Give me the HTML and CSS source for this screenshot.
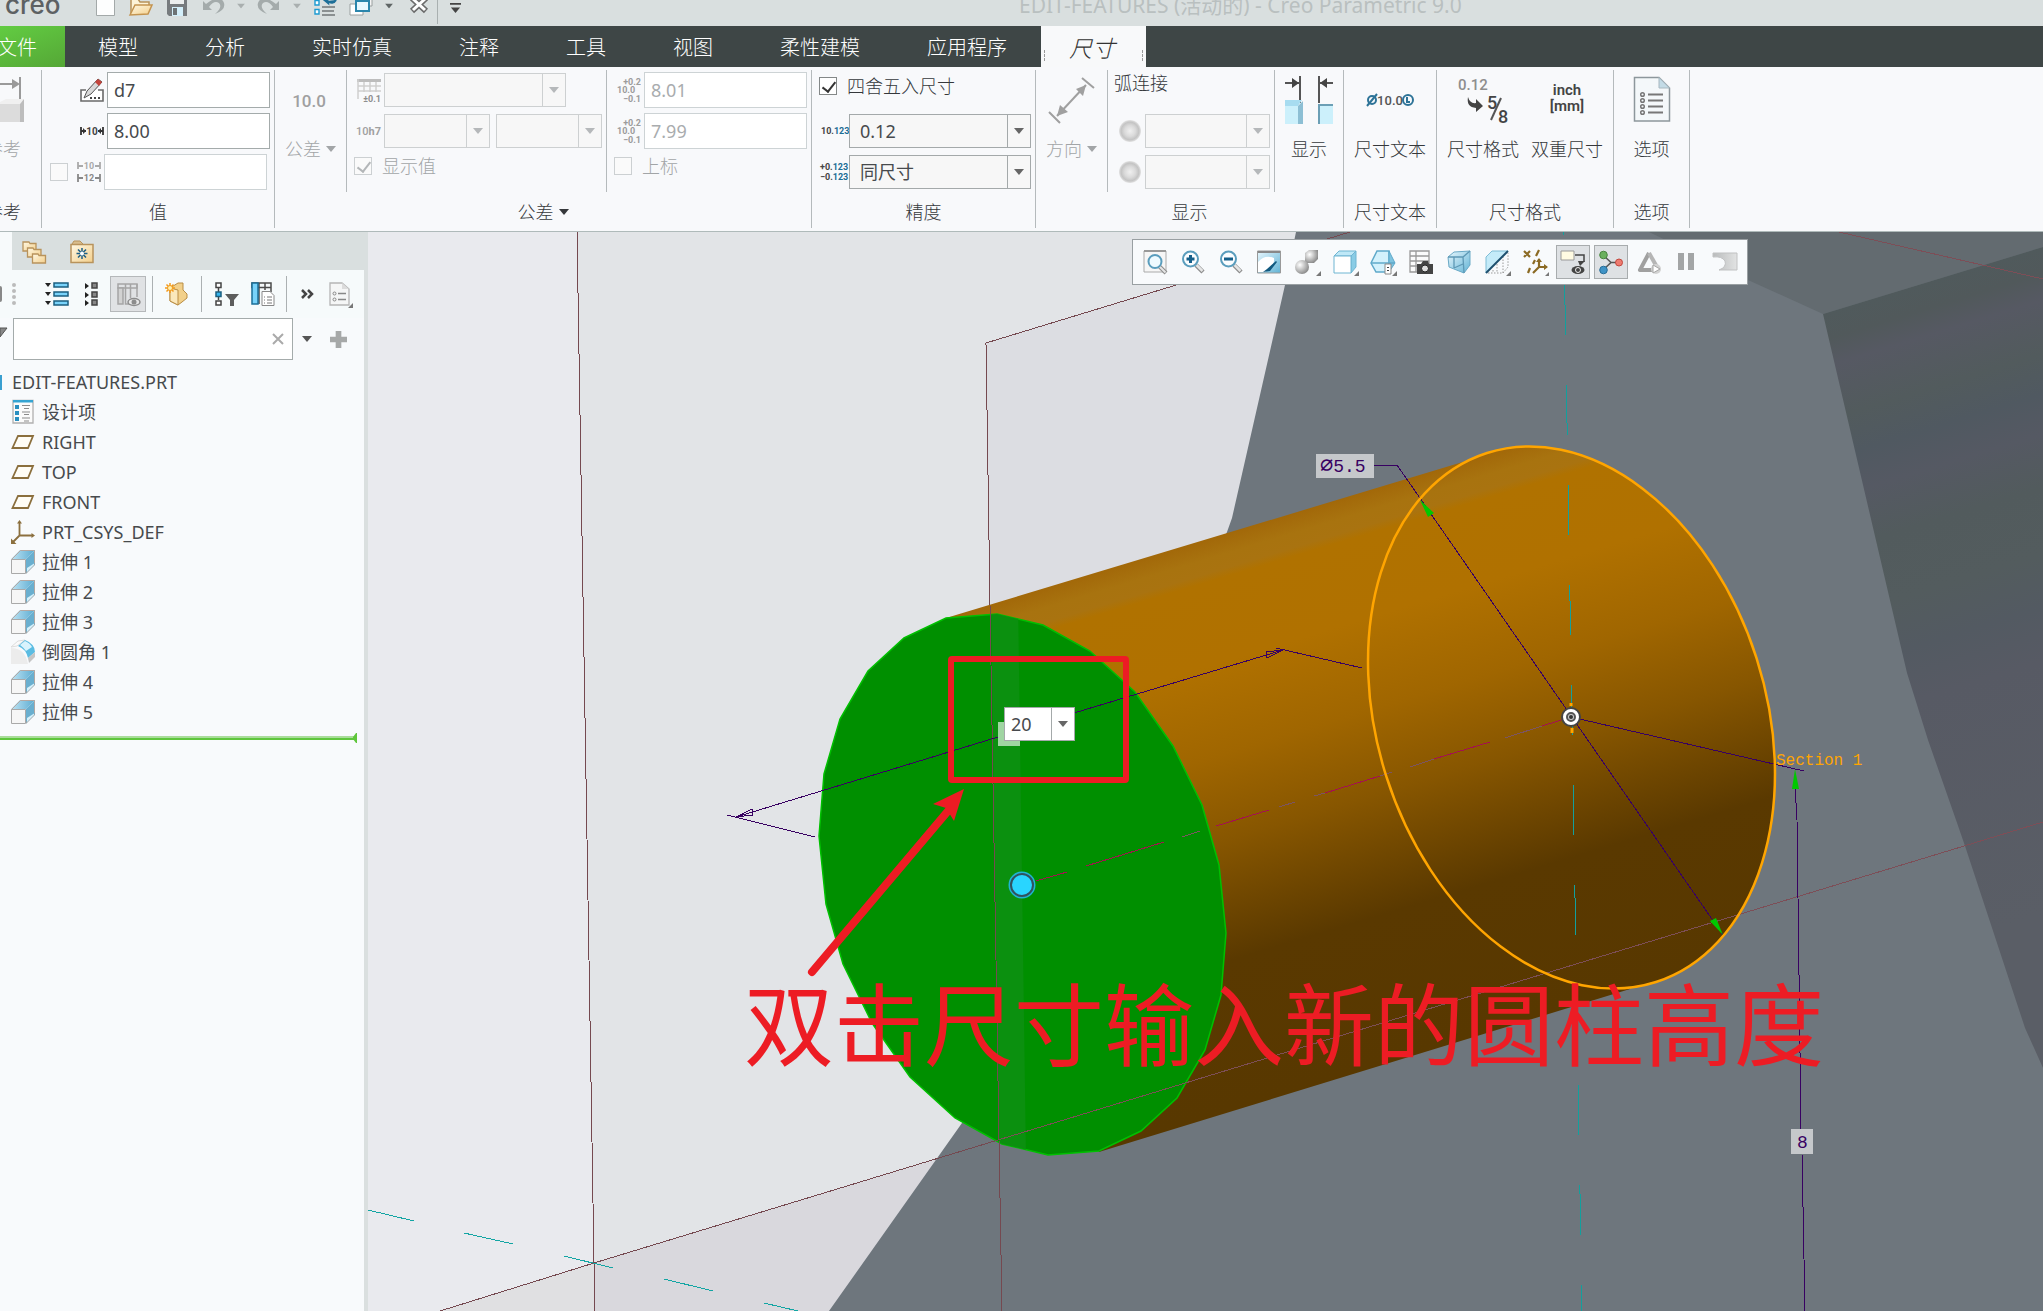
FILE: index.html
```html
<!DOCTYPE html>
<html lang="zh-CN">
<head>
<meta charset="utf-8">
<title>EDIT-FEATURES (活动的) - Creo Parametric 9.0</title>
<link rel="stylesheet" href="styles.css">
</head>
<body>
<svg class="defs" width="0" height="0" aria-hidden="true">
  <defs>
    <linearGradient id="gFolder" x1="0" y1="0" x2="1" y2="1"><stop offset="0" stop-color="#fff8e4"/><stop offset="1" stop-color="#f3cf8b"/></linearGradient>
    <linearGradient id="gBlue" x1="0" y1="0" x2="1" y2="1"><stop offset="0" stop-color="#e8f7fd"/><stop offset="1" stop-color="#62b4d6"/></linearGradient>
    <linearGradient id="gTop" x1="0" y1="0" x2="1" y2="0"><stop offset="0" stop-color="#bfe4f4"/><stop offset="1" stop-color="#5aabd0"/></linearGradient>
    <linearGradient id="gStop" x1="0" y1="0" x2="1" y2="0"><stop offset="0" stop-color="#b9bbbc"/><stop offset="1" stop-color="#e2e3e3"/></linearGradient>
    <radialGradient id="gBall" cx=".35" cy=".35" r=".7"><stop offset="0" stop-color="#fff"/><stop offset="1" stop-color="#888"/></radialGradient>
    <radialGradient id="gDot"><stop offset="0" stop-color="#f0f0f0"/><stop offset=".5" stop-color="#dadada"/><stop offset=".8" stop-color="#c4c4c4"/><stop offset=".9" stop-color="#d2d2d2"/><stop offset="1" stop-color="#e4e4e4"/></radialGradient>
    <symbol id="plane" viewBox="0 0 24 24"><path d="M7 6H22L17 18H1.500Z" fill="#fffdf6" stroke="#8b6f3e" stroke-width="1.800"/></symbol>
    <symbol id="extrude" viewBox="0 0 24 24"><path d="M0 9L9 0H24L15 9Z" fill="url(#gTop)"/><path d="M15 9L24 0V14L15 23Z" fill="#6aafcf"/><path d="M15 22L24 13V15L15 24Z" fill="#9ca7ad"/><path d="M16 18L23 13.500V15L16 22Z" fill="#d6f0fa"/><path d="M.500 9.500L9.500 .500H23.500V13" fill="none" stroke="#b3a8a3"/><path d="M.500 9.500H14.500V23.500H.500Z" fill="#f6f6f6" stroke="#a9a9a9"/></symbol>
    <symbol id="tri" viewBox="0 0 10 6"><path d="M0 0H10L5 6Z" fill="currentColor"/></symbol>
    <symbol id="tol" viewBox="0 0 24 24"><g font-family="Roboto" font-weight="700" font-size="9" fill="#9c9c9c"><text x="24" y="7" text-anchor="end">+0.2</text><text x="0" y="15" font-size="9">10.0</text><text x="24" y="24" text-anchor="end">−0.1</text></g></symbol>
    <symbol id="lens" viewBox="0 0 24 24"><path d="M15 15L22 22" stroke="#8d8d8d" stroke-width="4.500"/><path d="M15.500 15L21.500 21" stroke="#e6e6e6" stroke-width="2.500"/><circle cx="9.500" cy="9" r="7.500" fill="#fbfdff" stroke="#5a9dbd" stroke-width="2"/></symbol>
  </defs>
</svg>

<header class="titlebar">
  <div class="titlebar-in">
    <span class="logo">creo<sup>•</sup></span>
    <div class="quick">
      <button class="q" aria-label="新建"><svg viewBox="0 0 24 24"><path d="M3.500 0H16L21.500 5V23.500H3.500Z" fill="#fdfefe" stroke="#a3a9a9"/></svg></button>
      <button class="q" aria-label="打开"><svg viewBox="0 0 24 24"><path d="M2 22V7H9L11 10H20V14" fill="#fdf3d8" stroke="#b8925a" stroke-width="1.500"/><path d="M1 23L6 13H23L19 22Z" fill="url(#gFolder)" stroke="#c49450" stroke-width="1.500"/></svg></button>
      <button class="q" aria-label="保存"><svg viewBox="0 0 24 24"><path d="M2 0H22V24H4L2 22Z" fill="#777b7e"/><path d="M5 0H19V12H5Z" fill="#eceeee"/><path d="M7 15H18V24H7Z" fill="#d4effa"/><path d="M8 16H12V23H8Z" fill="#6d7375"/></svg></button>
      <button class="q" aria-label="撤消"><svg viewBox="0 0 24 24"><path d="M2 9V18H11L8 15Q13 8 18 11Q22 15 14 22Q25 18 23 11Q19 1 5 12Z" fill="#a4abab"/></svg></button>
      <button class="dd" aria-label="撤消列表"><svg viewBox="0 0 10 6"><use href="#tri" color="#a9afaf"/></svg></button>
      <button class="q" aria-label="重做"><svg viewBox="0 0 24 24"><path d="M22 9V18H13L16 15Q11 8 6 11Q2 15 10 22Q-1 18 1 11Q5 1 19 12Z" fill="#a4abab"/></svg></button>
      <button class="dd" aria-label="重做列表"><svg viewBox="0 0 10 6"><use href="#tri" color="#a9afaf"/></svg></button>
      <button class="q" aria-label="重新生成"><svg viewBox="0 0 24 24"><path d="M2 8.500H6V13H2ZM2 17.500H6V22H2Z" fill="#fff" stroke="#1c9ad1" stroke-width="1.400"/><path d="M9 15H22M9 19H21M9 23H22" stroke="#8b9091" stroke-width="2"/><path d="M9 6L15 11L14 6ZM14 9Q20 13 23 8" fill="#1d6f98" stroke="#1d6f98" stroke-width="2"/></svg></button>
      <button class="q" aria-label="窗口"><svg viewBox="0 0 24 24"><path d="M1 12H14V23H1Z" fill="#fff" stroke="#9aa0a0"/><path d="M10 4H23V14H10Z" fill="#f4f4f4" stroke="#9aa0a0"/><path d="M7 9H20V19H7Z" fill="#e8f8ff" stroke="#2b86ac" stroke-width="2"/></svg></button>
      <button class="dd" aria-label="窗口列表"><svg viewBox="0 0 10 6"><use href="#tri" color="#5f6565"/></svg></button>
      <button class="q" aria-label="关闭"><svg viewBox="0 0 24 24"><path d="M7 6L21 19M21 6L7 19" stroke="#6b6b6b" stroke-width="6"/><path d="M8 7L20 18M20 7L8 18" stroke="#fff" stroke-width="3"/></svg></button>
      <i class="q-sep"></i>
      <button class="more" aria-label="自定义"><svg viewBox="0 0 12 12"><path d="M0 0H12V2H0ZM1 5H11L6 11Z" fill="#444"/></svg></button>
    </div>
    <h1 class="doc-title">EDIT-FEATURES (活动的) - Creo Parametric 9.0</h1>
  </div>
</header>

<nav class="tabs">
  <button class="tab file">文件</button>
  <button class="tab">模型</button>
  <button class="tab">分析</button>
  <button class="tab">实时仿真</button>
  <button class="tab">注释</button>
  <button class="tab">工具</button>
  <button class="tab">视图</button>
  <button class="tab">柔性建模</button>
  <button class="tab">应用程序</button>
  <button class="tab active">尺寸</button>
</nav>

<section class="ribbon">
  <div class="group g-ref">
    <div class="cols"><div class="big off">
      <svg viewBox="0 0 24 48"><path d="M0 8H17M20 1V24" stroke="#9a9a9a" stroke-width="2" fill="none"/><path d="M12 3L20 8L12 13Z" fill="#9a9a9a"/><path d="M0 26L6 23H24L20 28H0Z" fill="#f0f0f0"/><path d="M0 28H20V46H0Z" fill="#dcdcdc"/><path d="M20 28L24 23V46H20Z" fill="#bdbdbd"/></svg>
      <span>参考</span></div></div>
    <div class="g-label">参考</div>
  </div>

  <div class="group g-value">
    <div class="cols"><div class="rows end">
      <label class="row"><svg class="ic" viewBox="0 0 24 24"><path d="M6 12H1V23H23V12H18" fill="#fff" stroke="#6a6a6a" stroke-width="1.600"/><path d="M4 20L7 13L18 1L22 4L11 16Z" fill="#d9d9d9" stroke="#555"/><path d="M18 1L22 4L19 8L15 4Z" fill="#c4443c"/><path d="M10 20H12M14 20H16M18 20H20" stroke="#444" stroke-width="2"/></svg><input type="text" class="w163" value="d7" aria-label="名称"></label>
      <label class="row"><svg class="ic" viewBox="0 0 24 24"><path d="M1 8V16M23 8V16M1 12H6M18 12H23" stroke="#333" stroke-width="1.800"/><path d="M3 9L6 12L3 15ZM21 9L18 12L21 15Z" fill="#333"/><text x="12" y="16" text-anchor="middle" font-family="Roboto" font-weight="700" font-size="10" fill="#444">10</text></svg><input type="text" class="w163" value="8.00" aria-label="值"></label>
      <div class="row shift"><input type="checkbox" disabled aria-label="覆盖值" class="pre"><svg class="ic" viewBox="0 0 24 24"><path d="M1 2V9M23 2V9M1 6H6M18 6H23" stroke="#aaa" stroke-width="1.800"/><path d="M1 14V22M23 14V22M1 18H6M18 18H23" stroke="#888" stroke-width="1.800"/><g font-family="Roboto" font-weight="700" font-size="9" fill="#aaa" text-anchor="middle"><text x="12" y="9">10</text><text x="12" y="21" fill="#888">12</text></g></svg><input type="text" class="w163" disabled aria-label="覆盖"></div>
    </div></div>
    <div class="g-label">值</div>
  </div>

  <div class="group g-tol">
    <div class="cols">
      <button class="big off w71" disabled><svg viewBox="0 0 48 48"><text x="22" y="31" text-anchor="middle" class="dimt" font-weight="500" font-size="17" fill="#a0a0a0">10.0</text></svg><span>公差<svg class="t" viewBox="0 0 10 6"><use href="#tri"/></svg></span></button>
      <div class="rows div pad-a">
        <div class="row"><svg class="ic" viewBox="0 0 24 24"><path d="M0 1H24V4H0Z" fill="#bdbdbd"/><path d="M1 1V21M7 4V14M13 4V14M19 4V14M1 8H24M1 13H24" stroke="#cfcfcf" stroke-width="1.500"/><text x="24" y="24" text-anchor="end" font-family="Roboto" font-weight="700" font-size="9" fill="#8e8e8e">±0.1</text></svg><span class="combo w182"><select disabled aria-label="公差表"><option></option></select></span></div>
        <div class="row"><svg class="ic" viewBox="0 0 24 24"><text x="-1" y="16" class="dimt" font-weight="500" font-size="11" fill="#a0a0a0">10<tspan font-weight="700">h7</tspan></text></svg><span class="combo w106"><select disabled aria-label="公差代号"><option></option></select></span><span class="combo w106 gap6"><select disabled aria-label="公差等级"><option></option></select></span></div>
        <label class="row chk off low"><input type="checkbox" checked disabled>显示值</label>
      </div>
      <div class="rows div pad-a">
        <div class="row"><svg class="ic" viewBox="0 0 24 24"><use href="#tol"/></svg><input type="text" class="w163" value="8.01" disabled aria-label="上公差"></div>
        <div class="row"><svg class="ic" viewBox="0 0 24 24"><use href="#tol"/></svg><input type="text" class="w163" value="7.99" disabled aria-label="下公差"></div>
        <label class="row chk off low"><input type="checkbox" disabled>上标</label>
      </div>
    </div>
    <div class="g-label">公差<svg class="t" viewBox="0 0 10 6"><use href="#tri"/></svg></div>
  </div>

  <div class="group g-prec">
    <div class="cols"><div class="rows pad-a">
      <label class="row chk high"><input type="checkbox" checked>四舍五入尺寸</label>
      <div class="row"><svg class="ic" viewBox="0 0 24 24"><text x="-1" y="15" class="dimt" font-weight="700" font-size="9" fill="#444">10.<tspan fill="#1b6d95">123</tspan></text></svg><span class="combo w182"><select aria-label="小数位数"><option>0.12</option></select></span></div>
      <div class="row"><svg class="ic" viewBox="0 0 24 24"><g class="dimt" font-weight="700" font-size="9" fill="#444"><text x="-2" y="10">+0.<tspan fill="#1b6d95">123</tspan></text><text x="-2" y="20">−0.<tspan fill="#1b6d95">123</tspan></text></g></svg><span class="combo w182"><select aria-label="公差小数位数"><option>同尺寸</option></select></span></div>
    </div></div>
    <div class="g-label">精度</div>
  </div>

  <div class="group g-disp">
    <div class="cols">
      <button class="big off w71" disabled><svg viewBox="0 0 48 48"><path d="M9 40L38 9" stroke="#a0a0a0" stroke-width="2"/><path d="M38 9L28 13L35 20ZM9 40L12 29L20 36Z" fill="#a0a0a0"/><path d="M34 2L46 12M1 36L12 47" stroke="#a0a0a0" stroke-width="2"/></svg><span>方向<svg class="t" viewBox="0 0 10 6"><use href="#tri"/></svg></span></button>
      <div class="rows div pad-b">
        <div class="row high2">弧连接</div>
        <label class="row dotrow"><svg class="ball" viewBox="0 0 22 22"><circle cx="11" cy="11" r="11" fill="url(#gDot)"/></svg><span class="combo w125"><select disabled aria-label="弧连接一"><option></option></select></span></label>
        <label class="row dotrow"><svg class="ball" viewBox="0 0 22 22"><circle cx="11" cy="11" r="11" fill="url(#gDot)"/></svg><span class="combo w125"><select disabled aria-label="弧连接二"><option></option></select></span></label>
      </div>
      <button class="big div w69"><svg viewBox="0 0 48 48"><path d="M15 0V27M34 0V27M0 7H14M34 7H48" stroke="#555" stroke-width="2"/><path d="M7 2L14 7L7 12ZM42 2L35 7L42 12Z" fill="#444"/><path d="M0 24H17L13 30H0Z" fill="#a7dcf0"/><path d="M0 30H13V48H0Z" fill="#ccf0fb"/><path d="M13 30L18 25V48H13Z" fill="#8dbfd4"/><path d="M34 29H48V48H34Z" fill="#ccf0fb"/><path d="M34 48V29H48" fill="none" stroke="#6b9fb5" stroke-width="2"/></svg><span>显示</span></button>
    </div>
    <div class="g-label">显示</div>
  </div>

  <div class="group g-text">
    <div class="cols"><button class="big w92"><svg viewBox="0 0 48 48"><circle cx="6" cy="24" r="4" fill="none" stroke="#2d7397" stroke-width="2"/><path d="M1 30L11 18" stroke="#2d7397" stroke-width="2"/><text x="24" y="29" text-anchor="middle" class="dimt" font-weight="500" font-size="13" fill="#555">10.0</text><circle cx="42" cy="24" r="5" fill="none" stroke="#2d7397" stroke-width="2"/><path d="M41 21V26H44" fill="none" stroke="#2d7397" stroke-width="2"/></svg><span>尺寸文本</span></button></div>
    <div class="g-label">尺寸文本</div>
  </div>

  <div class="group g-fmt">
    <div class="cols">
      <button class="big w84"><svg viewBox="0 0 48 48"><text x="-1" y="14" class="dimt" font-weight="500" font-size="15" fill="#8e8e8e">0.12</text><path d="M9 21Q11 28 17 27V23L24 30L17 36V32Q7 31 9 21Z" fill="#444"/><text x="28" y="33" class="dimt" font-weight="500" font-size="18" fill="#444">5</text><path d="M32 44L42 22" stroke="#555" stroke-width="2"/><text x="39" y="47" class="dimt" font-weight="500" font-size="18" fill="#444">8</text></svg><span>尺寸格式</span></button>
      <button class="big w84"><svg viewBox="0 0 48 48"><g class="dimt" font-weight="600" font-size="15" fill="#444" text-anchor="middle"><text x="24" y="19">inch</text><text x="24" y="35">[mm]</text></g></svg><span>双重尺寸</span></button>
    </div>
    <div class="g-label">尺寸格式</div>
  </div>

  <div class="group g-opt">
    <div class="cols"><button class="big w75"><svg viewBox="0 0 48 48"><path d="M6.500 1.500H31L41.500 12V45H6.500Z" fill="#f4f8fa" stroke="#8d979c" stroke-width="1.500"/><path d="M31 1.500V12H41.500Z" fill="#c3dbe6" stroke="#a8b8c0"/><g fill="none" stroke="#777" stroke-width="1.500"><circle cx="14.500" cy="18.500" r="1.800"/><circle cx="14.500" cy="24.500" r="1.800"/><circle cx="14.500" cy="30.500" r="1.800"/><circle cx="14.500" cy="36.500" r="1.800"/><path d="M20 18.500H35M20 24.500H35M20 30.500H35M20 36.500H35" stroke-width="2"/></g></svg><span>选项</span></button></div>
    <div class="g-label">选项</div>
  </div>
</section>

<main class="work">
  <aside class="side">
    <div class="side-tabs">
      <button aria-label="文件夹浏览器"><svg viewBox="0 0 24 24"><g fill="url(#gFolder)" stroke="#b8935c" stroke-width="1.300"><path d="M1 2H7L8 3.500H14V11H1Z"/><path d="M5.500 8H11L12 9.500H19V17H5.500Z"/><path d="M10.500 14H16L17 15.500H23.500V23H10.500Z"/></g></svg></button>
      <button aria-label="收藏夹"><svg viewBox="0 0 24 24"><path d="M2 4L4 1H10L13 4V8H2Z" fill="#d9bd8c" stroke="#b8935c"/><path d="M1 4.500H23V22.500H1Z" fill="url(#gFolder)" stroke="#b8935c" stroke-width="1.500"/><path d="M12 8V19M6.500 13.500H17.500M8 9.500L16 17.500M16 9.500L8 17.500" stroke="#1d5f86" stroke-width="1.500"/><circle cx="12" cy="13.500" r="2" fill="#fff"/></svg></button>
    </div>
    <div class="side-body">
      <div class="side-tools">
        <i class="sliver"></i>
        <svg class="grip" viewBox="0 0 4 22"><g fill="#bbb"><circle cx="2" cy="2" r="2"/><circle cx="2" cy="8" r="2"/><circle cx="2" cy="14" r="2"/><circle cx="2" cy="20" r="2"/></g></svg>
        <button class="tb a" aria-label="全部展开"><svg viewBox="0 0 24 24"><path d="M0 1H6L3 5ZM0 10H6L3 14ZM0 19H6L3 23Z" fill="#222"/><path d="M9 1H23V5H9ZM9 10H23V14H9ZM9 19H23V23H9Z" fill="#79d3fa" stroke="#1b5f80" stroke-width="1.500"/></svg></button>
        <button class="tb" aria-label="全部折叠"><svg viewBox="0 0 24 24"><path d="M4 1V7L8 4ZM4 10V16L8 13ZM4 18V24L8 21Z" fill="#222"/><path d="M11 1H16V6H11ZM11 10H16V15H11ZM11 18H16V23H11Z" fill="#888" stroke="#444" stroke-width="1.500"/></svg></button>
        <button class="tb on" aria-label="列显示"><svg viewBox="0 0 24 24"><path d="M2 2H21V6H2Z" fill="none" stroke="#a5a5a5" stroke-width="1.500"/><path d="M2 6H7V22H2Z" fill="#d2d2d2" stroke="#a5a5a5" stroke-width="1.500"/><path d="M9.500 2V22H14M14.500 2V16M21 2V15M9 22H15" fill="none" stroke="#a5a5a5" stroke-width="1.500"/><ellipse cx="18" cy="20" rx="6" ry="3.500" fill="#e6e6e6" stroke="#8c8c8c" stroke-width="1.500"/><circle cx="18" cy="20" r="2.500" fill="#8c8c8c"/></svg></button>
        <i class="vsep"></i>
        <button class="tb" aria-label="新建层"><svg viewBox="0 0 24 24"><path d="M5 6L13 1H18V8L22 12V16L17 20L13 23L5 19Z" fill="#f2d08a" stroke="#b98d44"/><path d="M5 6L13 8V23L5 19Z" fill="#fbe8bb" stroke="#b98d44"/><path d="M5 1V11M0 6H10M1.500 2.500L8.500 9.500M8.500 2.500L1.500 9.500" stroke="#f39a1c" stroke-width="1.500"/><circle cx="5" cy="6" r="2.500" fill="#fff1b0" stroke="#f39a1c"/></svg></button>
        <i class="vsep"></i>
        <button class="tb c" aria-label="树过滤器"><svg viewBox="0 0 24 24"><path d="M4.500 5V18" stroke="#444" stroke-width="1.500"/><path d="M2 1H7V5.500H2ZM2 19H7V23H2Z" fill="#fff" stroke="#444" stroke-width="1.500"/><path d="M2 10H7V14.500H2Z" fill="#35b5ee" stroke="#1b5f80" stroke-width="1.500"/><path d="M11 12H25L20 18V24H16V18Z" fill="#5d5d5d"/></svg></button>
        <button class="tb" aria-label="树列"><svg viewBox="0 0 24 24"><path d="M2 1H21V5.500H2ZM9 1V22M15 1V8M21 1V10" fill="none" stroke="#4c4c4c" stroke-width="1.500"/><path d="M2 1H8V22H2Z" fill="#79d3fa" stroke="#1b6f98" stroke-width="1.500"/><path d="M12 9.500H20L24 13.500V23.500H12Z" fill="#fff" stroke="#888"/><path d="M14 15H15M17 15H22M14 18H15M17 18H22M14 21H15M17 21H22" stroke="#777"/></svg></button>
        <i class="vsep"></i>
        <button class="tb d" aria-label="更多"><svg viewBox="0 0 24 24"><path d="M6 8L10 12L6 16M12 8L16 12L12 16" fill="none" stroke="#444" stroke-width="2.500"/></svg></button>
        <button class="tb" aria-label="设置"><svg viewBox="0 0 24 24"><path d="M-1 1H11L18 7V23H-1Z" fill="#f5f6f6" stroke="#b5b5b5" stroke-width="1.300"/><path d="M11 1V7H18Z" fill="#dcdcdc"/><g fill="none" stroke="#888"><circle cx="3.500" cy="11.500" r="1.500"/><circle cx="3.500" cy="17.500" r="1.500"/><path d="M7 11.500H15M7 17.500H15" stroke-width="1.500"/></g><path d="M22 21V26H17Z" fill="#777"/></svg></button>
      </div>
      <div class="search">
        <svg class="fun" viewBox="0 0 8 12"><path d="M0 0H7L0 9Z" fill="#888" stroke="#555"/></svg>
        <span class="s-box"><input type="text" aria-label="搜索"><button aria-label="清除"><svg viewBox="0 0 12 12"><path d="M1 1L11 11M11 1L1 11" stroke="#aaa" stroke-width="2"/></svg></button></span>
        <button class="s-dd" aria-label="搜索选项"><svg viewBox="0 0 10 6"><use href="#tri" color="#555"/></svg></button>
        <button class="s-plus" aria-label="添加"><svg viewBox="0 0 18 18"><path d="M6 0H12V6H18V12H12V18H6V12H0V6H6Z" fill="#a6a8a8"/></svg></button>
      </div>
      <ul class="tree">
        <li class="root"><i></i>EDIT-FEATURES.PRT</li>
        <li><svg viewBox="0 0 24 24"><path d="M2 .500H22V23H2Z" fill="#fbfbfb" stroke="#b0b0b0" stroke-width="1.300"/><path d="M2 0H22V2.500H2Z" fill="#35a4d2"/><path d="M4 5H8V9H4ZM4 11H8V15H4ZM4 17H8V21H4Z" fill="#2a8fc0"/><path d="M11 5.500H19M13 8.500H18M11 12H19M13 14.500H18M11 18H19M13 21H18" stroke="#8b8b8b"/></svg>设计项</li>
        <li><svg viewBox="0 0 24 24"><use href="#plane"/></svg>RIGHT</li>
        <li><svg viewBox="0 0 24 24"><use href="#plane"/></svg>TOP</li>
        <li><svg viewBox="0 0 24 24"><use href="#plane"/></svg>FRONT</li>
        <li><svg viewBox="0 0 24 24"><path d="M8.500 2V15.500H22M8.500 15.500L2 22" fill="none" stroke="#8b6f3e" stroke-width="1.800"/><path d="M6 3.500L8.500 0L11 3.500ZM20.500 13L24 15.500L20.500 18ZM0 18.500V24H5.500Z" fill="#8b6f3e"/></svg>PRT_CSYS_DEF</li>
        <li><svg viewBox="0 0 24 24"><use href="#extrude"/></svg>拉伸 1</li>
        <li><svg viewBox="0 0 24 24"><use href="#extrude"/></svg>拉伸 2</li>
        <li><svg viewBox="0 0 24 24"><use href="#extrude"/></svg>拉伸 3</li>
        <li><svg viewBox="0 0 24 24"><path d="M0 8Q14 8 17 24H0Z" fill="#ececec"/><path d="M0 7L7 1L14 0L6 6Z" fill="#fafafa" stroke="#ddd"/><path d="M7 6L14 0Q24 4 24 12L17 18Q15 9 7 6Z" fill="#5bbce2"/><path d="M9 5L14 1Q19 3 21 7L15 11Q13 8 9 5Z" fill="#d9f3fd"/><path d="M17 18L24 12V17L18 23Z" fill="#c5c5c5"/></svg>倒圆角 1</li>
        <li><svg viewBox="0 0 24 24"><use href="#extrude"/></svg>拉伸 4</li>
        <li><svg viewBox="0 0 24 24"><use href="#extrude"/></svg>拉伸 5</li>
      </ul>
      <div class="insert"><i></i></div>
    </div>
  </aside>

  <section class="view">
    <svg class="scene" viewBox="368 232 1675 1079" preserveAspectRatio="xMinYMin slice">
      <defs>
        <linearGradient id="cyl" gradientUnits="userSpaceOnUse" x1="1210" y1="538" x2="1370" y2="1069">
          <stop offset="0" stop-color="#a26809"/><stop offset=".035" stop-color="#a8730f"/><stop offset=".06" stop-color="#a97310"/><stop offset=".075" stop-color="#b07200"/><stop offset=".22" stop-color="#b07100"/><stop offset=".38" stop-color="#a06600"/><stop offset=".53" stop-color="#875600"/><stop offset=".74" stop-color="#5a3900"/><stop offset="1" stop-color="#583800"/>
        </linearGradient>
        <linearGradient id="wall" gradientUnits="userSpaceOnUse" x1="1823" y1="314" x2="2010" y2="925">
          <stop offset="0" stop-color="#505a5c"/><stop offset=".04" stop-color="#51595b"/><stop offset=".08" stop-color="#565963"/><stop offset=".16" stop-color="#525b5d"/><stop offset=".22" stop-color="#505961"/><stop offset=".28" stop-color="#555963"/><stop offset=".36" stop-color="#525b5d"/><stop offset=".46" stop-color="#535c5e"/><stop offset=".54" stop-color="#535a62"/><stop offset=".62" stop-color="#575a64"/><stop offset="1" stop-color="#5a5e66"/>
        </linearGradient>
        <polygon id="face" points="946,618 997,614 1043,625 1090,651 1135,692 1173,746 1202,805 1219,865 1226,933 1221,995 1205,1050 1177,1098 1141,1131 1099,1151 1048,1155 1002,1144 955,1118 910,1077 872,1023 843,964 826,904 819,836 824,774 840,719 868,671 904,638"/>
        <path id="rim" d="M1487 453A277 194 72.300 0 1 1656 982A277 194 72.300 0 1 1487 453Z"/>
        <clipPath id="front"><use href="#face"/></clipPath>
      </defs>
      <rect x="368" y="232" width="1675" height="1079" fill="#e9eaee"/>
      <polygon points="577,232 1400,232 1400,1311 594,1311 594,1263" fill="#e2e4e7"/>
      <polygon points="986,343 1352,232 1400,700 994,800" fill="#dcdde2"/>
      <polygon points="440,1311 594,1263 595,1311" fill="#e0e0e2"/>
      <polygon points="594,1263 1000,1140 1000,1311 595,1311" fill="#d9d8dd"/>
      <polygon points="1296,232 1285,285 1232,518 1227,532 962,1123 829,1311 2043,1311 2043,232" fill="#6e767d"/>
      <polygon points="1649,232 1748,280 1823,314 2043,247 2043,232" fill="#636b70"/>
      <polygon points="1823,314 2043,247 2043,1068 2025,1028 1965,846 1956,820 1928,740 1907,673" fill="url(#wall)"/>

      <path d="M946 618L1466 461L1630 989L1099 1152Z" fill="url(#cyl)"/>
      <use href="#rim" fill="url(#cyl)"/>
      <use href="#face" fill="#008f00" stroke="#00c000" stroke-width="1.500"/>
      <polygon points="991,600 1018,600 1026,1160 999,1160" fill="#0b900f" clip-path="url(#front)"/>

      <g shape-rendering="crispEdges" fill="none">
        <g stroke="#754950">
          <path d="M577 232L589 960L594 1263L595 1311"/>
          <path d="M1350 232L986 343L990 605L996 960L999 1140L1002 1311"/>
          <path d="M440 1311L594 1263L998 1140"/>
          <path d="M998 1140L1507 985L2043 822M1839 232L2043 279" stroke="#7d4e57"/>
        </g>
        <path d="M1563 185L1582 1311" stroke="#12a09d" stroke-dasharray="50 50"/>
        <path d="M368 1210L414 1221M464 1233L513 1244M564 1256L613 1268M664 1279L713 1291M764 1303L798 1311" stroke="#12a5a3"/>
        <g stroke="#a3124f">
          <path d="M1036 881L1067 872M1086 866L1164 842M1216 826L1269 810M1325 793L1380 776M1434 759L1490 742M1542 726L1571 717"/>
          <path d="M1182 837L1200 831M1279 807L1295 802M1314 796L1325 793M1380 776L1392 772M1410 767L1434 759M1505 738L1542 726" stroke="#7c5462"/>
        </g>
        <g stroke="#380062">
          <path d="M727 815L815 837M736 817L998 737M1074 713L1283 650M1276 648L1362 668"/>
          <path d="M736 817L752 809L753 815ZM1283 650L1266 652L1267 658Z"/>
          <path d="M1374 465H1397L1723 935M1571 717L1804 771M1795 785L1797 820L1801 1129M1802 1154L1805 1311"/>
        </g>
      </g>
      <use href="#rim" fill="none" stroke="#ffa500" stroke-width="2.500"/>
      <path d="M1420 500L1434 513L1428 517ZM1723 935L1710 921L1716 918ZM1795 769L1799 789H1792Z" fill="#00c800"/>
      <path d="M1571 703V706M1572 728V733" stroke="#ffa500" stroke-width="3"/>
      <circle cx="1571" cy="717" r="9" fill="#fff" stroke="#444" stroke-width="2"/>
      <circle cx="1571" cy="717" r="4" fill="#ccc" stroke="#555" stroke-width="2"/><circle cx="1571" cy="717" r="2" fill="#333"/>
      <circle cx="1022" cy="885" r="12" fill="#29d5ff" stroke="#20b4d4" stroke-width="3"/>
      <circle cx="1022" cy="885" r="11" fill="none" stroke="#31525f" stroke-width="2"/>

      <rect x="1316" y="454" width="58" height="24" fill="#c5c8cb"/>
      <text x="1320" y="472" class="cad" font-size="18" fill="#380062"><tspan font-size="22">⌀</tspan>5.5</text>
      <rect x="1791" y="1129" width="22" height="25" fill="#c5c8cb"/>
      <text x="1797" y="1148" class="cad" font-size="18" fill="#380062">8</text>
      <text x="1776" y="765" class="cad" font-size="16" fill="#ffa500">Section 1</text>

      <rect x="998" y="722" width="22" height="24" fill="#a0d5a2"/>
      <rect x="951" y="659" width="175" height="121" rx="1" fill="none" stroke="#ed1c24" stroke-width="6"/>
      <path d="M812 972L948 811" stroke="#ed1c24" stroke-width="8" stroke-linecap="round"/>
      <path d="M964 789L933 804L946 808L954 821Z" fill="#ed1c24"/>
      <text x="744" y="1059" class="note">双击尺寸输入新的圆柱高度</text>
      <foreignObject x="1004" y="707" width="71" height="34"><span class="combo edit"><select aria-label="尺寸值"><option>20</option></select></span></foreignObject>
    </svg>

    <div class="vtools">
      <button aria-label="重新调整"><svg viewBox="0 0 24 24"><path d="M1 1H23V22H1Z" fill="#f6f6f6" stroke="#aaa"/><path d="M1 1H23" stroke="#999" stroke-width="2"/><path d="M15 15L23 23" stroke="#8d8d8d" stroke-width="4"/><path d="M15.500 15.500L22.500 22.500" stroke="#e6e6e6" stroke-width="2"/><circle cx="12" cy="11.500" r="6.500" fill="#eefaff" stroke="#5a9dbd" stroke-width="2"/></svg></button>
      <button aria-label="放大"><svg viewBox="0 0 24 24"><use href="#lens"/><path d="M9.500 5V13M5.500 9H13.500" stroke="#155f8a" stroke-width="3"/></svg></button>
      <button aria-label="缩小"><svg viewBox="0 0 24 24"><use href="#lens"/><path d="M5 9H14" stroke="#155f8a" stroke-width="3"/></svg></button>
      <button aria-label="重画"><svg viewBox="0 0 24 24"><path d="M.500 1H23.500V23H.500Z" fill="url(#gBlue)" stroke="#999"/><path d="M1 12Q8 4 17 8Q18 16 8 22H1Z" fill="#fff"/><path d="M1 2H23" stroke="#888" stroke-width="2"/><path d="M19 11L10 19L6 22L13 21L20 12Z" fill="#125a80"/></svg></button>
      <button aria-label="渲染选项"><svg viewBox="0 0 24 24"><path d="M10 3L14 0H23V9L19 13H10Z" fill="url(#gBall)"/><circle cx="7" cy="17" r="7" fill="url(#gBall)"/><path d="M26 21V26H21Z" fill="#777"/></svg></button>
      <button aria-label="显示样式"><svg viewBox="0 0 24 24"><path d="M1 6L6 1H23L18 6Z" fill="#bfe8f7" stroke="#6fb5d2"/><path d="M18 6L23 1V17L18 23Z" fill="#8acce5" stroke="#6fb5d2"/><path d="M1 6H18V23H1Z" fill="#fff" stroke="#6fb5d2"/><path d="M26 21V26H21Z" fill="#777"/></svg></button>
      <button aria-label="已保存方向"><svg viewBox="0 0 24 24"><path d="M0 13L6 1H18V13L16 22H5Z" fill="#d3f1fc" stroke="#5fa9ca" stroke-width="1.500"/><path d="M18 1L24 13L18 22V13Z" fill="#7fc4e0" stroke="#5fa9ca"/><path d="M0 13H24" stroke="#5fa9ca" stroke-width="1.500"/><path d="M14 14H20V24H14Z" fill="#fff" stroke="#888"/><path d="M16 17H18V18H16ZM16 20H18V21H16Z" fill="#444"/><path d="M26 21V26H21Z" fill="#777"/></svg></button>
      <button aria-label="视图管理器"><svg viewBox="0 0 24 24"><path d="M1 1H20V22H1ZM1 6H20M1 11H20M1 16H10M7 1V22" fill="#fbfbfb" stroke="#999" stroke-width="1.300"/><path d="M8 14H12L14 11H19L20 14H24V24H8Z" fill="#444"/><circle cx="16" cy="18.500" r="3.500" fill="#ddd" stroke="#222"/></svg></button>
      <button aria-label="透视图"><svg viewBox="0 0 24 24"><path d="M1 7L7 2L23 1V15L17 23L2 17Z" fill="url(#gBlue)" stroke="#6aa9c6"/><path d="M1 7L16 7L23 1M16 7L17 23M7 7V18M16 14L7 18" fill="none" stroke="#5d98b5" stroke-width="1.300"/></svg></button>
      <button aria-label="截面"><svg viewBox="0 0 24 24"><path d="M1 7L7 1H23L1 23Z" fill="#c4ebf9" stroke="#7fbdd6"/><path d="M3 23H18V7M18 23L23 17V3M8 20V23M12 14V23" fill="none" stroke="#999" stroke-dasharray="1.500 1.500"/><path d="M1 23L23 1" stroke="#1d4f6e" stroke-width="2"/><path d="M26 21V26H21Z" fill="#777"/></svg></button>
      <button aria-label="基准显示"><svg viewBox="0 0 24 24"><path d="M1 1L7 7M7 1L1 7M16 0L13 6M12 10L10 14M7 18L5 23M16 9V17H24M16 17L10 23" fill="none" stroke="#8b6a24" stroke-width="2.200"/><path d="M13 12L16 8L19 12ZM21 14L25 17L21 20Z" fill="#8b6a24"/><path d="M26 22V26H22Z" fill="#777"/></svg></button>
      <button class="on" aria-label="注释显示"><svg viewBox="0 0 24 24"><path d="M0 1H13V10H0Z" fill="#fffbe2" stroke="#999"/><path d="M14 5H23V12" fill="none" stroke="#444" stroke-width="1.500"/><path d="M17 11H24L19 16Z" fill="#444"/><ellipse cx="17" cy="20" rx="6.500" ry="4" fill="#444"/><circle cx="17" cy="20" r="2.500" fill="#444" stroke="#eee"/></svg></button>
      <button class="on" aria-label="旋转中心"><svg viewBox="0 0 24 24"><path d="M4 5L12 12.500L4 20M12 12.500H20" fill="none" stroke="#555" stroke-width="1.500"/><circle cx="4.500" cy="5" r="3.800" fill="#6ab05e" stroke="#47853e"/><circle cx="4.500" cy="20" r="3.800" fill="#3f93c6" stroke="#276d98"/><circle cx="20" cy="12.500" r="3.500" fill="#ee7b70" stroke="#c2473d"/></svg></button>
      <button aria-label="仿真"><svg viewBox="0 0 24 24"><path d="M12 3L3 20H15" fill="none" stroke="#a0a0a0" stroke-width="4" stroke-linejoin="round"/><path d="M12 3L20 17" stroke="#b5b5b5" stroke-width="4"/><circle cx="19" cy="19" r="5" fill="#d2d2d2"/><path d="M16 15V23L23 19Z" fill="#fff" stroke="#a5a5a5"/></svg></button>
      <button aria-label="暂停"><svg viewBox="0 0 24 24"><path d="M3 3H9V20H3ZM13 3H19V20H13Z" fill="#a3a5a6"/></svg></button>
      <button aria-label="停止"><svg viewBox="0 0 24 24"><path d="M0 3H24V20H6Q14 17 12 11Q9 6 0 7Z" fill="url(#gStop)" stroke="#c0c1c2"/></svg></button>
    </div>
  </section>
</main>
</body>
</html>
```
FILE: styles.css
```css
* { box-sizing: border-box; }
html, body { height: 100%; }
body {
  margin: 0;
  display: flex;
  flex-direction: column;
  min-height: 100vh;
  overflow: hidden;
  background: #f8fafc;
  color: #35383b;
  font: 300 18px/24px "Noto Sans", "Noto Sans CJK SC", sans-serif;
}
button { font: inherit; color: inherit; background: none; border: 0; padding: 0; margin: 0; }
svg { display: block; overflow: visible; }
.defs { position: absolute; }

/* Title bar */
.titlebar { height: 26px; background: #d9dfdf; overflow: hidden; flex: none; }
.titlebar-in { display: flex; align-items: flex-start; height: 34px; margin-top: -8px; }
.logo { width: 87px; padding-left: 5px; font: 500 26px/34px Inter, sans-serif; color: #5d6163; margin-top: -4px; }
.logo sup { font-size: 8px; line-height: 0; vertical-align: 13px; }
.quick { display: flex; align-items: center; gap: 12px; height: 24px; margin-left: 6px; }
.q svg { width: 24px; height: 24px; }
.dd { width: 8px; padding-top: 3px; }
.dd svg { width: 8px; height: 6px; }
.q-sep { width: 1px; height: 40px; margin-left: -4px; background: #a9b0b0; }
.more svg { width: 11px; height: 11px; margin-top: 8px; }
.doc-title { margin: 0 0 0 558px; font-size: 21px; line-height: 26px; font-weight: 400; color: #b9c0c0; white-space: nowrap; }

/* Ribbon tabs */
.tabs { display: flex; gap: 1px; height: 41px; background: #3e4646; flex: none; }
.tab { padding: 3px 33px 0; font-size: 20px; color: #fff; white-space: nowrap; }
.tab.file { width: 65px; padding: 3px 0 0; margin-right: -1px; text-indent: -3px; text-align: left; background: linear-gradient(160deg, #62cc42, #55a736); }
.tab.active { position: relative; width: 105px; padding: 2px 3px 0 0; background: #f8f9fa; color: #333; font-size: 23px; font-style: italic; }
.tab.active::before, .tab.active::after { content: ""; position: absolute; bottom: 6px; height: 11px; border-left: 1px dashed #999; }
.tab.active::before { left: 3px; }
.tab.active::after { right: 3px; }

/* Ribbon */
.ribbon { display: flex; height: 165px; padding-top: 3px; background: #f8f9fb; border-bottom: 1px solid #afbaba; flex: none; }
.group { display: flex; flex-direction: column; height: 158px; border-right: 1px solid #b5babc; flex: none; }
.g-ref { width: 42px; }
.g-value { width: 233px; }
.g-tol { width: 537px; }
.g-prec { width: 224px; }
.g-disp { width: 308px; }
.g-text { width: 93px; }
.g-fmt { width: 177px; }
.g-opt { width: 76px; }
.cols { display: flex; height: 122px; flex: none; }
.g-label { display: flex; align-items: center; justify-content: center; height: 36px; padding-top: 4px; white-space: nowrap; }
.g-ref .g-label, .g-ref .big span { align-self: flex-start; margin-left: -15px; }
.rows { display: flex; flex-direction: column; gap: 5px; padding-top: 2px; white-space: nowrap; }
.rows.end { width: 100%; align-items: flex-end; padding-right: 4px; }
.div { border-left: 1px solid #b5babc; }
.pad-a { width: 260px; padding-left: 10px; }
.pad-a + .pad-a { width: 204px; }
.pad-b { width: 167px; padding-left: 6px; }
.row { display: flex; align-items: center; gap: 3px; height: 36px; flex: none; }
.shift { margin-right: 3px; }
.ic { width: 24px; height: 24px; flex: none; }
.chk { gap: 10px; margin-left: -3px; }
.low { height: 24px; }
.high { padding-bottom: 9px; }
.high2 { padding-bottom: 14px; }
.dotrow { gap: 4px; padding-left: 5px; }
.ball { width: 22px; height: 22px; }
.off { color: #a2a5a7; }
.big { display: flex; flex-direction: column; align-items: center; gap: 13px; padding-top: 6px; white-space: nowrap; }
.big > svg { width: 48px; height: 48px; }
.g-ref .big { width: 41px; align-items: flex-start; }
.g-ref .big > svg { width: 24px; }
.big span { display: flex; align-items: center; }
.t { width: 10px; height: 6px; margin-left: 5px; }
.w69 { width: 69px; }
.w71 { width: 71px; }
.w75 { width: 75px; }
.w84 { width: 84px; }
.w92 { width: 92px; }
.g-fmt .cols { padding-left: 4px; }

input[type="text"] {
  height: 36px; padding: 0 6px; border: 1px solid #a4abab; background: #fff;
  font: inherit; font-weight: 400; color: #474a4d; outline: 0; border-radius: 0;
}
input[type="text"]:disabled { border-color: #cdd3d5; color: #a9acae; }
.w163 { width: 163px; }
input[type="checkbox"] {
  appearance: none; position: relative; width: 18px; height: 18px; margin: 0;
  border: 1px solid #848888; background: #fff; flex: none;
}
input.pre { margin-right: 6px; }
input[type="checkbox"]:disabled { border-color: #ccd0d2; background: #fafafa; }
input[type="checkbox"]:checked::after {
  content: ""; position: absolute; left: 5px; top: 1px; width: 6px; height: 11px;
  border: solid #333; border-width: 0 2px 2px 0; transform: rotate(38deg);
}
input[type="checkbox"]:checked:disabled::after { border-color: #b3b6b8; }

.combo { position: relative; display: block; height: 34px; color: #666; }
.combo select {
  appearance: none; display: block; width: 100%; height: 34px; padding: 0 30px 0 10px; margin: 0;
  border: 1px solid #a4a9aa; border-radius: 0; font: inherit; font-weight: 400; color: #474a4d; outline: 0;
  background: linear-gradient(#a4a9aa, #a4a9aa) right 22px top / 1px 100% no-repeat #f7f7f7;
}
.combo select:disabled { opacity: 1; border-color: #cdd0d1; background: linear-gradient(#cdd0d1, #cdd0d1) right 22px top / 1px 100% no-repeat #f7f7f7; }
.combo::after { content: ""; position: absolute; right: 7px; top: 14px; width: 10px; height: 6px; background: #666; clip-path: polygon(0 0, 100% 0, 50% 100%); pointer-events: none; }
.combo:has(select:disabled)::after { background: #b5b8ba; }
.w182 { width: 182px; }
.w106 { width: 106px; }
.gap6 { margin-left: 3px; }
.w125 { width: 125px; }
.combo.edit select { background-color: #fff; padding: 0 24px 0 6px; }
.dimt { font-family: Roboto, sans-serif; }

/* Work area */
.work { display: flex; flex: 1; min-height: 0; }
.side { display: flex; flex-direction: column; width: 368px; flex: none; background: #dadfdf; }
.side-tabs { display: flex; align-items: center; gap: 24px; height: 38px; margin-left: 12px; padding: 2px 0 0 10px; background: #d9dfdf; box-shadow: -12px 0 0 #f7fafb; }
.side-tabs svg { width: 24px; height: 24px; }
.side-body { flex: 1; width: 364px; background: #f8fafc; }
.side-tools { display: flex; align-items: center; height: 48px; background: #f6fafb; }
.sliver { width: 2px; height: 16px; background: #888; border-radius: 0 4px 4px 0; }
.grip { width: 4px; height: 22px; margin-left: 10px; }
.tb { display: flex; align-items: center; justify-content: center; width: 36px; height: 36px; flex: none; }
.tb svg { width: 24px; height: 24px; }
.tb.a { margin-left: 23px; }
.tb.on { border: 1px solid #b5b8ba; background: #e0e2e4; }
.tb.a + .tb { margin-right: -1px; }
.vsep { width: 1px; height: 36px; margin: 0 6px; background: #abb0b2; flex: none; }
.tb.d { width: 30px; margin-right: 2px; }
.search { display: flex; align-items: center; height: 42px; }
.fun { width: 8px; height: 12px; margin: 0 5px 10px 0; }
.s-box { position: relative; width: 280px; height: 42px; }
.s-box input { width: 100%; height: 42px; padding-right: 30px; }
.s-box button { position: absolute; right: 9px; top: 15px; }
.s-box svg { width: 12px; height: 12px; }
.s-dd { width: 10px; margin-left: 9px; }
.s-dd svg { width: 10px; height: 6px; }
.s-plus { margin-left: 18px; }
.s-plus svg { width: 17px; height: 17px; }
.tree { list-style: none; margin: 7px 0 0; padding: 0; color: #474a4d; }
.tree li { display: flex; align-items: center; gap: 7px; height: 30px; padding-left: 11px; font-weight: 400; white-space: pre; }
.tree svg { width: 24px; height: 24px; }
.tree .root { padding-left: 0; gap: 10px; }
.root i { width: 2px; height: 15px; background: #3a9fd0; }
.insert { display: flex; justify-content: flex-end; align-items: center; width: 357px; height: 4px; margin-top: 9px; background: linear-gradient(#a9dc9b 50%, #5fc63c 50%); }
.insert i { width: 4px; height: 10px; background: #5fc63c; clip-path: polygon(100% 0, 100% 100%, 75% 100%, 0 60%, 0 40%, 75% 0); }

.view { position: relative; flex: 1; min-width: 0; overflow: hidden; }
.scene { width: 100%; height: 100%; }
.cad { font-family: "Liberation Mono", monospace; font-weight: 400; white-space: pre; }
.note { font-family: "Noto Sans CJK SC", sans-serif; font-weight: 400; font-size: 90px; fill: #ed1c24; }

/* In-graphics toolbar floats over the model */
.vtools { position: absolute; left: 764px; top: 7px; display: flex; gap: 4px; padding: 5px; border: 1px solid #999fa2; background: #f8fafc; }
.vtools button { display: flex; align-items: center; justify-content: center; width: 34px; height: 34px; }
.vtools .on { border: 1px solid #a8acae; background: #dee1e4; }
.vtools svg { width: 24px; height: 24px; }
```
